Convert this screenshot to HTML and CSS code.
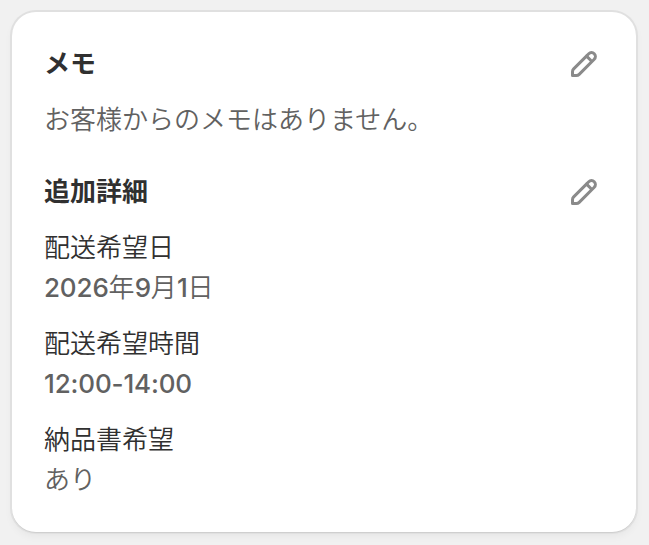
FILE: index.html
```html
<!DOCTYPE html>
<html lang="ja">
<head>
<meta charset="utf-8">
<title>メモ</title>
<link rel="stylesheet" href="styles.css">
</head>
<body>
<main class="card">
  <section class="section">
    <header class="section-header">
      <h2 class="title">メモ</h2>
      <button class="edit" aria-label="編集"><svg class="icon" viewBox="0 0 20 20"><path fill-rule="evenodd" d="M15.655 4.344a2.695 2.695 0 0 0-3.81 0l-.599.599-.009-.009-1.06 1.06.008.01-5.88 5.88a2.75 2.75 0 0 0-.805 1.944v1.922a.75.75 0 0 0 .75.75h1.922a2.75 2.75 0 0 0 1.944-.806l7.54-7.539a2.695 2.695 0 0 0 0-3.81Zm-4.409 2.72-5.88 5.88a1.25 1.25 0 0 0-.366.884v1.172h1.172c.331 0 .65-.132.883-.366l5.88-5.88-1.689-1.69Zm2.75.629.599-.599a1.195 1.195 0 1 0-1.69-1.689l-.598.599 1.69 1.689Z"/></svg></button>
    </header>
    <p class="value">お客様からのメモはありません。</p>
  </section>
  <section class="section">
    <header class="section-header">
      <h2 class="title">追加詳細</h2>
      <button class="edit" aria-label="編集"><svg class="icon" viewBox="0 0 20 20"><path fill-rule="evenodd" d="M15.655 4.344a2.695 2.695 0 0 0-3.81 0l-.599.599-.009-.009-1.06 1.06.008.01-5.88 5.88a2.75 2.75 0 0 0-.805 1.944v1.922a.75.75 0 0 0 .75.75h1.922a2.75 2.75 0 0 0 1.944-.806l7.54-7.539a2.695 2.695 0 0 0 0-3.81Zm-4.409 2.72-5.88 5.88a1.25 1.25 0 0 0-.366.884v1.172h1.172c.331 0 .65-.132.883-.366l5.88-5.88-1.689-1.69Zm2.75.629.599-.599a1.195 1.195 0 1 0-1.69-1.689l-.598.599 1.69 1.689Z"/></svg></button>
    </header>
    <dl class="details">
      <div><dt class="label">配送希望日</dt><dd class="value"><span class="num">2026</span>年<span class="num">9</span>月<span class="num">1</span>日</dd></div>
      <div><dt class="label">配送希望時間</dt><dd class="value"><span class="num">12:00-14:00</span></dd></div>
      <div><dt class="label">納品書希望</dt><dd class="value">あり</dd></div>
    </dl>
  </section>
</main>
</body>
</html>
```
FILE: styles.css
```css
* { box-sizing: border-box; margin: 0; padding: 0; }
body {
  height: 545px;
  padding: 12px 13px 13px 12px;
  background: #f1f1f1;
  font: 350 26px/40px Inter, "Noto Sans CJK JP", sans-serif;
}
.card {
  height: 520px;
  padding: 32px;
  display: flex;
  flex-direction: column;
  gap: 32px;
  background: #fff;
  border-radius: 24px;
  box-shadow: 0 1px 0 0 #cfcfcf, 0 0 0 2px #e0e0e0, 0 4px 8px rgba(0, 0, 0, .05);
}
.section { display: flex; flex-direction: column; gap: 16px; }
.section-header { height: 40px; display: flex; align-items: center; justify-content: space-between; }
.title { font-size: 26px; line-height: 40px; font-weight: 650; color: #303030; }
.edit { width: 40px; height: 40px; border: 0; background: none; }
.icon { display: block; width: 40px; height: 40px; fill: #8a8a8a; }
.details { display: flex; flex-direction: column; gap: 16px; }
.label { color: #303030; }
.value { color: #616161; }
.num { font-weight: 450; letter-spacing: -.15px; }
```
